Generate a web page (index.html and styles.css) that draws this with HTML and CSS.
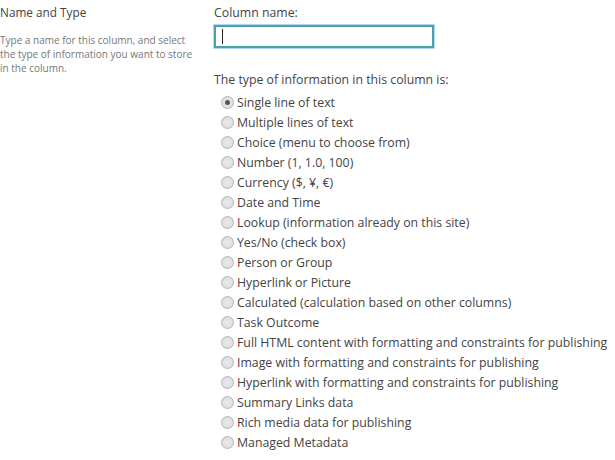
FILE: index.html
```html
<!DOCTYPE html>
<html>
<head>
<meta charset="utf-8">
<link rel="stylesheet" href="styles.css">
</head>
<body>
<div class="section">
  <div class="side">
    <h3 class="side-title">Name and Type</h3>
    <p class="side-desc">Type a name for this column, and select the type of information you want to store in the column.</p>
  </div>
  <div class="main">
    <div class="label">Column name:</div>
    <div class="input"><span class="caret"></span></div>
    <div class="label type-label">The type of information in this column is:</div>
    <ul class="options">
      <li class="opt"><span class="radio checked"></span>Single line of text</li>
      <li class="opt"><span class="radio"></span>Multiple lines of text</li>
      <li class="opt"><span class="radio"></span>Choice (menu to choose from)</li>
      <li class="opt"><span class="radio"></span>Number (1, 1.0, 100)</li>
      <li class="opt"><span class="radio"></span>Currency ($, ¥, €)</li>
      <li class="opt"><span class="radio"></span>Date and Time</li>
      <li class="opt"><span class="radio"></span>Lookup (information already on this site)</li>
      <li class="opt"><span class="radio"></span>Yes/No (check box)</li>
      <li class="opt"><span class="radio"></span>Person or Group</li>
      <li class="opt"><span class="radio"></span>Hyperlink or Picture</li>
      <li class="opt"><span class="radio"></span>Calculated (calculation based on other columns)</li>
      <li class="opt"><span class="radio"></span>Task Outcome</li>
      <li class="opt"><span class="radio"></span>Full HTML content with formatting and constraints for publishing</li>
      <li class="opt"><span class="radio"></span>Image with formatting and constraints for publishing</li>
      <li class="opt"><span class="radio"></span>Hyperlink with formatting and constraints for publishing</li>
      <li class="opt"><span class="radio"></span>Summary Links data</li>
      <li class="opt"><span class="radio"></span>Rich media data for publishing</li>
      <li class="opt"><span class="radio"></span>Managed Metadata</li>
    </ul>
  </div>
</div>
</body>
</html>
```
FILE: styles.css
```css
html, body {
  margin: 0;
  padding: 0;
  background: #fff;
}
body {
  font-family: "Open Sans", "Noto Sans", sans-serif;
  color: #444;
}
.section {
  display: flex;
  padding-top: 4px;
}
.side {
  width: 214px;
  flex: none;
}
.side-title {
  margin: 0;
  font-size: 11.8px;
  font-weight: normal;
  line-height: 16px;
  color: #444;
}
.side-desc {
  margin: 13px 0 0;
  font-size: 10px;
  line-height: 14px;
  color: #777;
  width: 200px;
}
.main {
  flex: 1;
}
.label {
  font-size: 12.3px;
  line-height: 18px;
  color: #444;
}
.input {
  margin-top: 3px;
  width: 210px;
  height: 19px;
  border: 2px solid #4aa3a8;
  box-shadow: 0 0 0 1px #b7d8f5;
  display: flex;
  align-items: center;
  padding-left: 6px;
}
.caret {
  width: 1px;
  height: 15px;
  background: #222;
}
.type-label {
  margin-top: 23px;
}
.options {
  list-style: none;
  margin: 3px 0 0;
  padding: 0 0 0 7px;
}
.opt {
  display: flex;
  align-items: center;
  height: 20px;
  font-size: 12.3px;
  color: #444;
  white-space: nowrap;
}
.radio {
  width: 11px;
  height: 11px;
  border-radius: 50%;
  border: 1px solid #b5b5b5;
  background: radial-gradient(circle, #eaeaea 0, #d9d9d9 100%);
  margin-right: 3px;
  flex: none;
  display: flex;
  align-items: center;
  justify-content: center;
}
.radio.checked::after {
  content: "";
  width: 5px;
  height: 5px;
  border-radius: 50%;
  background: #555;
}
```
